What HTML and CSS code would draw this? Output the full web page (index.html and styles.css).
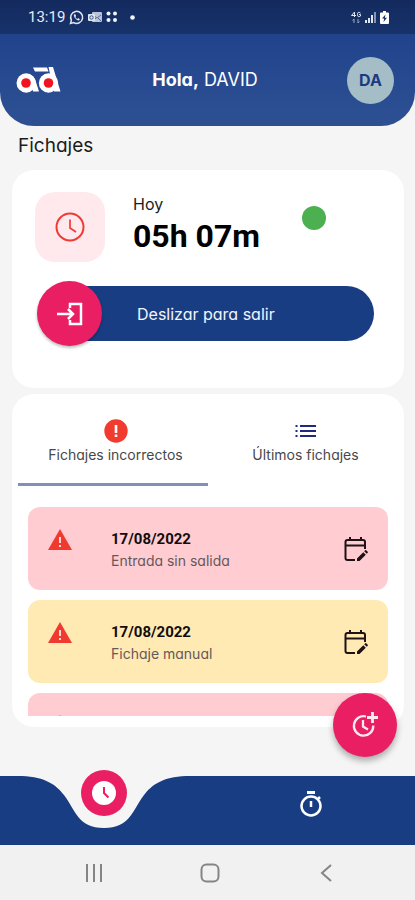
FILE: index.html
```html
<!DOCTYPE html>
<html lang="es">
<head>
<meta charset="utf-8">
<meta name="viewport" content="width=device-width, initial-scale=1">
<title>Fichajes</title>
<link rel="stylesheet" href="styles.css">
</head>
<body>
<svg class="defs" aria-hidden="true">
  <symbol id="warning" viewBox="0 0 24 22">
    <path fill="#f0392f" d="M12 0 24 21H0z"/>
    <path fill="#ffd9d6" d="M11 8h2v6h-2zM11 16h2v2h-2z"/>
  </symbol>
  <symbol id="edit-calendar" viewBox="0 0 24 24">
    <path fill="none" stroke="#1d1215" stroke-width="2" d="M11 23H3.500Q1.500 23 1.500 21V5Q1.500 3 3.500 3H19Q21 3 21 5V12M1.500 8.500H21M6 0V4M17 0V4"/>
    <path fill="#1d1215" d="m13 21.500 6.300-6.300 2.500 2.500-6.300 6.300H13zM20.200 14.300l1-1q.5-.5 1 0l1.500 1.500q.5.500 0 1l-1 1z"/>
  </symbol>
</svg>
<div class="app">
  <div class="status">
    <div class="status-group">
      <span class="time">13:19</span>
      <svg width="15" height="15" viewBox="0 0 15 15"><path d="m1.500 13.500.9-3.200A6 6 0 1 1 4.700 12.600z" fill="none" stroke="#dfe5f1" stroke-width="1.500"/><path d="M5.200 4.200q-1 1 .2 3 1.500 2.600 3.500 3.200 1.400.3 2-1.200L9.300 8.100l-.9.900Q7 8.200 6.400 6.900l.7-.8-.8-1.900z" fill="#dfe5f1"/></svg>
      <svg width="14" height="12" viewBox="0 0 14 12"><rect x="4" y="1" width="10" height="10" rx="1" fill="#b9c3da"/><path d="m5 4 4 3 4-3M5 10l3-3m5 3-3-3" fill="none" stroke="#5d6d96"/><rect y="3" width="7" height="7" rx="1" fill="#dfe5f1"/><circle cx="3.500" cy="6.500" r="1.700" fill="none" stroke="#3b4f80"/></svg>
      <svg class="dots" width="12" height="12" viewBox="0 0 12 12" fill="#f2f5fb"><circle cx="2.500" cy="2.500" r="2"/><circle cx="9" cy="2.500" r="2"/><circle cx="2.500" cy="9" r="2"/><circle cx="9" cy="9" r="2"/></svg>
      <svg class="more" width="5" height="5" viewBox="0 0 5 5"><circle cx="2.500" cy="2.500" r="2.300" fill="#f2f5fb"/></svg>
    </div>
    <div class="status-group">
      <svg width="10" height="13" viewBox="0 0 10 13" fill="none" stroke="#dfe5f1"><path d="M3.500 6V1L.5 4.500H5M9.500 2Q6.500 0 6.500 3.500T9.500 5V3.500H8"/><path stroke="#9aa8c6" d="M3 12V8L1.500 9.500M7 8v4l1.500-1.500"/></svg>
      <svg width="11" height="12" viewBox="0 0 11 12"><path fill="#dfe5f1" d="M0 9h2v3H0zM3 7h2v5H3zM6 4h2v8H6z"/><path fill="#8493b8" d="M9 1h2v11H9z"/></svg>
      <svg width="9" height="13" viewBox="0 0 9 13"><path fill="#fff" d="M3 0h3v1.500h2q1 0 1 1V12q0 1-1 1H1q-1 0-1-1V2.500q0-1 1-1h2z"/><path fill="#172d5d" d="M5.500 3.500 2 7.500h2.200L3.500 11 7 6.700H4.800z"/></svg>
    </div>
  </div>

  <header class="header">
    <svg class="logo" width="45" height="27" viewBox="0 0 45 27" role="img" aria-label="AD">
      <path fill="#fff" d="M17 .5h14l1.500 4H19zM32.500 0H37l3 10 4.500 14.500H38zM15 8l4 4 4 12.500h-6z"/>
      <circle cx="10.200" cy="16" r="9.700" fill="#fff"/>
      <circle cx="32.500" cy="16" r="9.700" fill="#fff"/>
      <circle cx="10" cy="16" r="4.800" fill="#f01420"/>
      <circle cx="32.500" cy="16" r="4.800" fill="#f01420"/>
    </svg>
    <p class="greeting"><b>Hola,</b> DAVID</p>
    <button class="avatar" type="button">DA</button>
  </header>

  <main class="main">
    <h1 class="title">Fichajes</h1>

    <section class="card today">
      <div class="today-row">
        <div class="clock-tile">
          <svg width="30" height="30" viewBox="0 0 30 30" fill="none" stroke="#ef3b36"><circle cx="15" cy="15" r="13.500" stroke-width="2"/><path stroke-width="1.700" d="M15 7.500V16l6 4"/></svg>
        </div>
        <div class="today-text">
          <span class="today-label">Hoy</span>
          <strong class="today-time">05h 07m</strong>
        </div>
        <span class="online"></span>
      </div>
      <button class="slide" type="button">
        <span class="knob">
          <svg width="26" height="24" viewBox="0 0 26 24" fill="none" stroke="#fff" stroke-width="2.500"><path d="M13 6V2h11v20H13v-4M0 12h16M11 7l5 5-5 5"/></svg>
        </span>
        <span class="slide-label">Deslizar para salir</span>
      </button>
    </section>

    <section class="card records">
      <div class="tabs">
        <button class="tab active" type="button">
          <svg width="24" height="24" viewBox="0 0 24 24"><circle cx="12" cy="12" r="11.700" fill="#f23b2f"/><path fill="#fff" d="M10.700 6h2.600v8h-2.600zM10.700 15.500h2.600V18h-2.600z"/></svg>
          Fichajes incorrectos
        </button>
        <button class="tab" type="button">
          <svg width="24" height="24" viewBox="0 0 24 24" fill="#20297c"><path d="M1.500 6h2v2h-2zM6 6h16v2H6zM1.500 11h2v2h-2zM6 11h16v2H6zM1.500 16h2v2h-2zM6 16h16v2H6z"/></svg>
          Últimos fichajes
        </button>
      </div>
      <ul class="list">
        <li class="item error">
          <svg class="item-icon" width="24" height="22"><use href="#warning"/></svg>
          <div class="item-text"><b>17/08/2022</b><span>Entrada sin salida</span></div>
          <button class="edit" type="button" aria-label="Editar"><svg width="24" height="24"><use href="#edit-calendar"/></svg></button>
        </li>
        <li class="item manual">
          <svg class="item-icon" width="24" height="22"><use href="#warning"/></svg>
          <div class="item-text"><b>17/08/2022</b><span>Fichaje manual</span></div>
          <button class="edit" type="button" aria-label="Editar"><svg width="24" height="24"><use href="#edit-calendar"/></svg></button>
        </li>
        <li class="item error">
          <svg class="item-icon" width="24" height="22"><use href="#warning"/></svg>
        </li>
      </ul>
    </section>
  </main>

  <button class="fab" type="button" aria-label="Añadir fichaje">
    <svg width="26" height="26" viewBox="0 0 26 26" fill="none" stroke="#ffe9f1" stroke-width="2.300"><path d="M14 4.500A9.700 9.700 0 1 0 21.300 13.500M11 8v6.500l5 3"/><path stroke-width="2.800" d="M20.500 0v11M15 5.500h11"/></svg>
  </button>

  <nav class="nav">
    <a class="nav-link" href="#fichajes" aria-label="Fichajes">
      <svg class="notch" width="164" height="53" viewBox="0 0 164 53"><path fill="#f5f5f5" d="M0 0C24 1 34 9 42 19 54 35 56 52 82 52S110 35 122 19C130 9 140 1 164 0z"/></svg>
      <span class="nav-current"><svg width="24" height="24" viewBox="0 0 24 24"><circle cx="12" cy="12" r="12" fill="#fff"/><path d="M12 6v6l4.500 4.500" fill="none" stroke="#e91e63" stroke-width="2"/></svg></span>
    </a>
    <a class="nav-link" href="#cronometro" aria-label="Cronómetro">
      <svg width="24" height="26" viewBox="0 0 24 26" fill="none" stroke="#fff"><circle cx="12" cy="15" r="9.500" stroke-width="2.500"/><path stroke-width="3" d="M8 1.500h8"/><path stroke-width="2.500" d="M12 10v6M18.500 8.500 21 6"/></svg>
    </a>
  </nav>

  <div class="system">
    <button type="button" aria-label="Recientes"><svg width="18" height="18" viewBox="0 0 18 18"><path d="M2 0v18M9 0v18M16 0v18" stroke="#858585" stroke-width="2"/></svg></button>
    <button type="button" aria-label="Inicio"><svg width="20" height="20" viewBox="0 0 20 20"><rect x="1.500" y="1.500" width="17" height="17" rx="5" fill="none" stroke="#858585" stroke-width="2"/></svg></button>
    <button type="button" aria-label="Atrás"><svg width="18" height="18" viewBox="0 0 18 18"><path d="M14 1 5 9l9 8" fill="none" stroke="#858585" stroke-width="2"/></svg></button>
  </div>
</div>
</body>
</html>
```
FILE: styles.css
```css
* { box-sizing: border-box; margin: 0; padding: 0; }

body {
  background: #f5f5f5;
  color: #1c1c1c;
  font-family: Inter, "Open Sans", sans-serif;
  font-feature-settings: "cv11";
}

button { border: 0; background: none; font: inherit; font-feature-settings: inherit; color: inherit; cursor: pointer; }
svg { display: block; flex: none; }
.defs { position: absolute; width: 0; height: 0; }

.app { position: relative; display: flex; flex-direction: column; height: 100vh; overflow: hidden; }

.status {
  display: flex;
  justify-content: space-between;
  align-items: center;
  height: 34px;
  padding: 0 26px 0 28px;
  background: linear-gradient(#132a5e, #17336b);
}
.status-group { display: flex; align-items: center; gap: 4px; }
.time { font: 15px/20px Roboto, sans-serif; color: #e6ebf5; }
.more { margin-left: 8px; }

.header {
  display: grid;
  grid-template-columns: 1fr auto 1fr;
  align-items: center;
  height: 92px;
  padding: 0 21px 0 16px;
  border-radius: 0 0 34px 34px;
  background: linear-gradient(#20438c, #2e5093);
}
.greeting { font-size: 18px; line-height: 24px; color: #fff; }
.avatar {
  justify-self: end;
  width: 47px;
  height: 47px;
  border-radius: 50%;
  background: #a5bdc6;
  color: #1c3a80;
  font-size: 16px;
  font-weight: 700;
}

.main { flex: 1; min-height: 0; display: flex; flex-direction: column; padding: 8px 11px 49px 12px; }
.title { padding-left: 6px; margin-bottom: 12px; font-size: 19px; font-weight: 400; line-height: 24px; }

.card { border-radius: 22px; background: #fff; }
.today { padding: 22px 30px 42px 23px; margin-bottom: 6px; }
.today-row { display: flex; align-items: flex-start; }
.clock-tile { display: grid; place-items: center; width: 70px; height: 70px; border-radius: 20px; background: #ffe9ec; }
.today-text { display: flex; flex-direction: column; margin-left: 28px; }
.today-label { font-size: 16px; line-height: 24px; }
.today-time { font: 700 32px/40px Roboto, sans-serif; color: #000; }
.online { width: 24px; height: 24px; margin: 14px 0 0 42px; border-radius: 50%; background: #4caf50; }

.slide { position: relative; display: flex; align-items: center; width: 100%; height: 65px; margin-top: 19px; }
.slide::before {
  content: "";
  position: absolute;
  inset: 5px 0 5px 16px;
  border-radius: 28px;
  background: #193d83;
}
.knob {
  position: relative;
  display: grid;
  place-items: center;
  width: 65px;
  height: 65px;
  margin-left: 2px;
  border-radius: 50%;
  background: #e91e63;
  box-shadow: 0 2px 3px rgba(0, 0, 0, .25);
}
.slide-label { position: relative; margin-left: 35px; font-size: 16px; line-height: 24px; color: #f3f5fb; }

.records { flex: 1; min-height: 0; display: flex; flex-direction: column; padding-bottom: 11px; }
.tabs { display: grid; grid-template-columns: 1fr 1fr; padding: 0 6px; }
.tab {
  display: flex;
  flex-direction: column;
  align-items: center;
  gap: 3px;
  padding: 25px 0 19px 5px;
  border-bottom: 3px solid transparent;
  font-size: 14px;
  line-height: 18px;
  color: #484848;
}
.tab.active { border-color: #8290b4; }

.list { flex: 1; min-height: 0; overflow: hidden; padding: 21px 16px 0; list-style: none; }
.item { display: flex; align-items: flex-start; height: 83px; margin-bottom: 10px; padding: 22px 20px 0; border-radius: 12px; }
.error { background: #ffccd2; }
.manual { background: #ffeab3; }
.item-text { flex: 1; display: flex; flex-direction: column; margin-left: 39px; font-size: 14px; line-height: 24px; color: #66585a; }
.item-text b { font: 700 15px/20px Roboto, sans-serif; color: #120c0d; }
.edit { margin-top: 8px; }

.fab {
  position: absolute;
  right: 18px;
  bottom: 143px;
  display: grid;
  place-items: center;
  width: 64px;
  height: 64px;
  border-radius: 50%;
  background: #e91e63;
  box-shadow: 0 4px 6px rgba(0, 0, 0, .3);
}

.nav { display: grid; grid-template-columns: 1fr 1fr; height: 69px; background: #193d83; }
.nav-link { position: relative; display: flex; justify-content: center; padding-top: 15px; }
.notch { position: absolute; top: 0; left: 50%; margin-left: -82px; }
.nav-current {
  position: absolute;
  top: -6px;
  display: grid;
  place-items: center;
  width: 46px;
  height: 46px;
  border-radius: 50%;
  background: #e91e63;
}

.system { display: grid; grid-template-columns: repeat(3, 1fr); height: 55px; padding: 0 31px 0 36px; background: #f1f1f1; }
.system button { display: grid; place-items: center; }
```
